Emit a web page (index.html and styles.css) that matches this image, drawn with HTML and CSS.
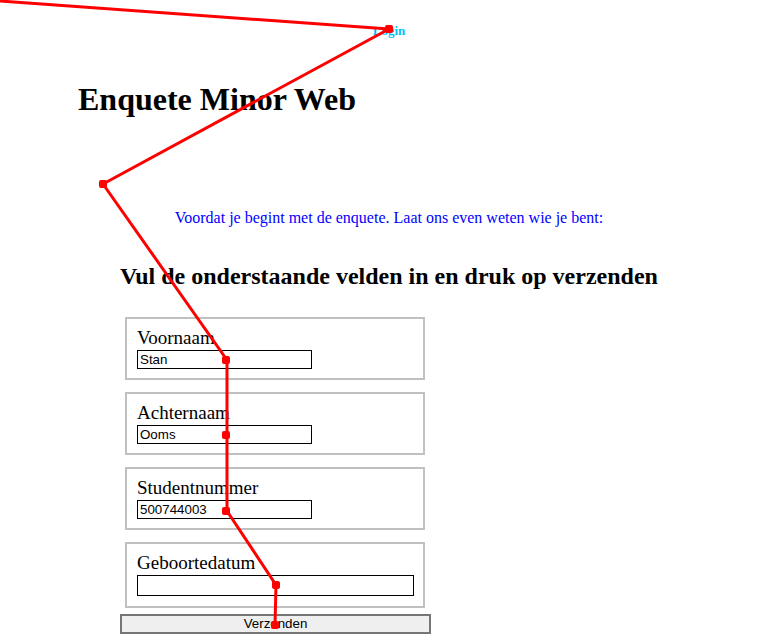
FILE: index.html
```html
<!DOCTYPE html>
<html lang="nl">
<head>
<meta charset="utf-8">
<title>Enquete Minor Web</title>
<link rel="stylesheet" href="styles.css">
</head>
<body>
<header class="nav"><a class="login" href="#">Login</a></header>
<h1 class="title">Enquete Minor Web</h1>
<p class="intro">Voordat je begint met de enquete. Laat ons even weten wie je bent:</p>
<h2 class="subtitle">Vul de onderstaande velden in en druk op verzenden</h2>
<form class="form">
  <fieldset class="field">
    <label class="label" for="voornaam">Voornaam</label>
    <input class="input" id="voornaam" type="text" value="Stan">
  </fieldset>
  <fieldset class="field">
    <label class="label" for="achternaam">Achternaam</label>
    <input class="input" id="achternaam" type="text" value="Ooms">
  </fieldset>
  <fieldset class="field">
    <label class="label" for="studentnummer">Studentnummer</label>
    <input class="input" id="studentnummer" type="text" value="500744003">
  </fieldset>
  <fieldset class="field field-last">
    <label class="label" for="geboortedatum">Geboortedatum</label>
    <input class="input input-wide" id="geboortedatum" type="text" value="">
  </fieldset>
  <button class="submit" type="button">Verzenden</button>
</form>
<svg class="trace" width="778" height="638" viewBox="0 0 778 638" xmlns="http://www.w3.org/2000/svg">
  <polyline points="0,1 389,29 103,184 227,360 227,435 227,511 276,585 275,625" fill="none" stroke="#ff0000" stroke-width="3" stroke-linejoin="round"/>
  <g fill="#ff0000">
    <rect x="385" y="25" width="8" height="8" rx="2"/>
    <rect x="99" y="180" width="8" height="8" rx="2"/>
    <rect x="222" y="356" width="8" height="8" rx="2"/>
    <rect x="222" y="431" width="8" height="8" rx="2"/>
    <rect x="222" y="507" width="8" height="8" rx="2"/>
    <rect x="272" y="581" width="8" height="8" rx="2"/>
    <rect x="271" y="621" width="8" height="8" rx="2"/>
  </g>
</svg>
</body>
</html>
```
FILE: styles.css
```css
html, body {
  margin: 0;
  padding: 0;
  background: #ffffff;
}
body {
  position: relative;
  width: 778px;
  height: 638px;
  overflow: hidden;
  font-family: "Liberation Serif", "Times New Roman", serif;
  color: #000;
}
.nav {
  padding-top: 22px;
  text-align: center;
  line-height: 16px;
  height: 16px;
}
.login {
  font-size: 13px;
  font-weight: bold;
  color: #00bfff;
  text-decoration: none;
}
.title {
  margin: 43px 0 0 78px;
  font-size: 32px;
  line-height: 36px;
  font-weight: bold;
}
.intro {
  margin: 92px 0 0 0;
  text-align: center;
  font-size: 16px;
  line-height: 18px;
  color: #0000ff;
}
.subtitle {
  margin: 35px 0 0 0;
  text-align: center;
  font-size: 24px;
  line-height: 28px;
  font-weight: bold;
}
.form {
  margin-top: 27px;
  display: flex;
  flex-direction: column;
  align-items: flex-start;
}
.field {
  box-sizing: border-box;
  width: 300px;
  margin: 0 0 12px 125px;
  padding: 8px 10px 9px 10px;
  border: 2px solid #c0c0c0;
  min-width: 0;
}
.field-last {
  margin-bottom: 6px;
  padding-bottom: 10px;
}
.label {
  display: block;
  font-size: 19px;
  line-height: 22px;
}
.input {
  display: block;
  box-sizing: border-box;
  margin: 1px 0 0 0;
  width: 175px;
  height: 19px;
  padding: 0 2px;
  border: 1px solid #000;
  font-family: "Liberation Sans", Arial, sans-serif;
  font-size: 13.33px;
  color: #000;
  background: #fff;
}
.input-wide {
  width: 277px;
  height: 21px;
}
.submit {
  box-sizing: border-box;
  margin-left: 120px;
  width: 311px;
  height: 20px;
  padding: 0;
  border: 2px solid #767676;
  background: #efefef;
  font-family: "Liberation Sans", Arial, sans-serif;
  font-size: 13.33px;
  color: #000;
  line-height: 16px;
}
.trace {
  position: absolute;
  left: 0;
  top: 0;
  pointer-events: none;
}
```
